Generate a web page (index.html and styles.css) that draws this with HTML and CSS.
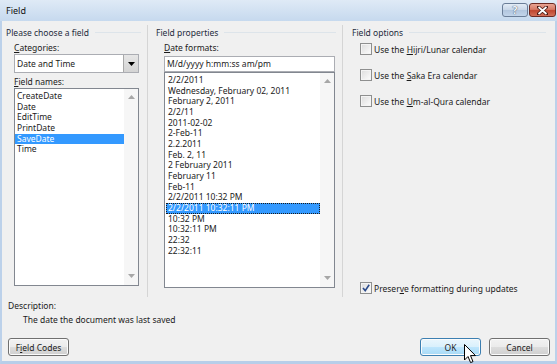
FILE: index.html
```html
<!DOCTYPE html>
<html>
<head>
    <title>Field</title>
    <meta name="viewport" content="width=device-width, initial-scale=1.0">
    <link rel="stylesheet" href="styles.css">
</head>
<body>
    <div class="window">
        <div class="titlebar">
            <span class="title">Field</span>
            <div class="caption">
                <span class="cap help">?</span>
                <span class="cap close">
                    <svg width="11" height="9" viewBox="0 0 11 9"><path d="M1.5 1 L9.5 8 M9.5 1 L1.5 8" stroke="#4a1a14" stroke-width="3.4" stroke-linecap="square"/><path d="M1.5 1 L9.5 8 M9.5 1 L1.5 8" stroke="#fff" stroke-width="1.8"/></svg>
                </span>
            </div>
        </div>

        <div class="dialog">
            <div class="columns">
                <!-- left: field choice -->
                <section class="col col-choose">
                    <div class="group-title"><span>Please choose a field</span></div>
                    <div class="inner">
                        <div class="label first"><u>C</u>ategories:</div>
                        <div class="combo">
                            <span class="combo-text">Date and Time</span>
                            <span class="combo-btn">
                                <svg width="7" height="4" viewBox="0 0 7 4"><path d="M0 0 H7 L3.5 4 Z" fill="#000"/></svg>
                            </span>
                        </div>
                        <div class="label names"><u>F</u>ield names:</div>
                        <div class="listbox list-names">
                            <div class="items">
                                <div class="item">CreateDate</div>
                                <div class="item">Date</div>
                                <div class="item">EditTime</div>
                                <div class="item">PrintDate</div>
                                <div class="item selected">SaveDate</div>
                                <div class="item">Time</div>
                            </div>
                            <div class="scrollbar">
                                <svg width="7" height="4" viewBox="0 0 7 4"><path d="M0 4 H7 L3.5 0 Z" fill="#a7a7a7"/></svg>
                                <svg width="7" height="4" viewBox="0 0 7 4"><path d="M0 0 H7 L3.5 4 Z" fill="#a7a7a7"/></svg>
                            </div>
                        </div>
                    </div>
                </section>

                <!-- middle: field properties -->
                <section class="col col-props">
                    <div class="group-title"><span>Field properties</span></div>
                    <div class="inner">
                        <div class="label first"><u>D</u>ate formats:</div>
                        <div class="textbox">M/d/yyyy h:mm:ss am/pm</div>
                        <div class="listbox list-formats">
                            <div class="items">
                                <div class="item">2/2/2011</div>
                                <div class="item">Wednesday, February 02, 2011</div>
                                <div class="item">February 2, 2011</div>
                                <div class="item">2/2/11</div>
                                <div class="item">2011-02-02</div>
                                <div class="item">2-Feb-11</div>
                                <div class="item">2.2.2011</div>
                                <div class="item">Feb. 2, 11</div>
                                <div class="item">2 February 2011</div>
                                <div class="item">February 11</div>
                                <div class="item">Feb-11</div>
                                <div class="item">2/2/2011 10:32 PM</div>
                                <div class="item selected focused">2/2/2011 10:32:11 PM</div>
                                <div class="item">10:32 PM</div>
                                <div class="item">10:32:11 PM</div>
                                <div class="item">22:32</div>
                                <div class="item">22:32:11</div>
                            </div>
                            <div class="scrollbar">
                                <svg width="7" height="4" viewBox="0 0 7 4"><path d="M0 4 H7 L3.5 0 Z" fill="#a7a7a7"/></svg>
                                <svg width="7" height="4" viewBox="0 0 7 4"><path d="M0 0 H7 L3.5 4 Z" fill="#a7a7a7"/></svg>
                            </div>
                        </div>
                    </div>
                </section>

                <!-- right: field options -->
                <section class="col col-options">
                    <div class="group-title"><span>Field options</span></div>
                    <div class="inner options">
                        <div class="check"><span class="box"></span><span>Use the <u>H</u>ijri/Lunar calendar</span></div>
                        <div class="check"><span class="box"></span><span>Use the <u>S</u>aka Era calendar</span></div>
                        <div class="check"><span class="box"></span><span>Use the <u>U</u>m-al-Qura calendar</span></div>
                        <div class="check preserve">
                            <span class="box checked">
                                <svg width="10" height="10" viewBox="0 0 10 10"><path d="M2 5 L4.2 7.6 L8.2 1.8" fill="none" stroke="#2a4a8a" stroke-width="1.6"/></svg>
                            </span>
                            <span>Preser<u>v</u>e formatting during updates</span>
                        </div>
                    </div>
                </section>
            </div>

            <div class="description">
                <div class="desc-label">Description:</div>
                <div class="desc-text">The date the document was last saved</div>
            </div>

            <div class="buttons">
                <button class="btn">F<u>i</u>eld Codes</button>
                <div class="right-buttons">
                    <button class="btn btn-hot">OK
                        <svg class="cursor" width="13" height="20" viewBox="0 0 13 20"><path d="M0.5 0.5 V16 L4 12.5 L6.6 18.6 L9 17.6 L6.5 11.6 H11.5 Z" fill="#fff" stroke="#000" stroke-width="1"/></svg>
                    </button>
                    <button class="btn">Cancel</button>
                </div>
            </div>
        </div>
    </div>
</body>
</html>
```

FILE: styles.css
```css
body {
    margin: 0;
    font-family: "Noto Sans", "Open Sans", sans-serif;
    font-size: 8.5px;
    color: #1b1b1b;
}
u {
    text-decoration-thickness: 1px;
    text-underline-offset: 1px;
}
.window {
    width: 557px;
    height: 364px;
    box-sizing: border-box;
    background: #c7d9ee;
    border-left: 2px solid #bcd1ea;
    border-right: 2px solid #bcd1ea;
    border-bottom: 3px solid #b7cee9;
    display: flex;
    flex-direction: column;
}
.titlebar {
    height: 21px;
    flex: none;
    display: flex;
    align-items: flex-start;
    justify-content: space-between;
    background: linear-gradient(to bottom, #dfeaf6, #c6d9ee);
    margin: 0 -2px;
    padding: 0 1px 0 6px;
}
.title {
    font-size: 9px;
    line-height: 21px;
    color: #111;
}
.caption {
    display: flex;
    gap: 1px;
    padding-top: 3px;
}
.cap {
    height: 14px;
    box-sizing: border-box;
    border: 1px solid #6b7e98;
    border-radius: 3px;
    display: flex;
    align-items: center;
    justify-content: center;
}
.help {
    width: 26px;
    background: linear-gradient(to bottom, #e3ecf6 0%, #c9d7e8 48%, #b2c6de 52%, #c2d4ea 100%);
    color: #f4f7fb;
    font-weight: bold;
    font-size: 10px;
    text-shadow: 0 0 1px #4b5d75, 0 0 1px #4b5d75;
}
.close {
    width: 27px;
    border-color: #6d2a22;
    background: linear-gradient(to bottom, #e8a493 0%, #d67a66 45%, #c0462f 55%, #d3705a 100%);
}
.dialog {
    flex: 1;
    background: #f0f0f0;
    padding: 0 3px 0 4px;
    display: flex;
    flex-direction: column;
}
.columns {
    display: flex;
    margin-top: 4px;
}
.col {
    padding-top: 1px;
    display: flex;
    flex-direction: column;
}
.col-choose {
    width: 141px;
    border-right: 1px solid #d5d5d5;
    padding-bottom: 11px;
}
.col-props {
    width: 186px;
    padding-left: 8px;
    border-right: 1px solid #d5d5d5;
}
.col-options {
    flex: 1;
    padding-left: 9px;
}
.group-title {
    display: flex;
    align-items: center;
    height: 12px;
    gap: 6px;
    color: #1e2b3c;
}
.group-title::after {
    content: "";
    flex: 1;
    height: 1px;
    background: #dde4ea;
    margin-right: 6px;
}
.inner {
    padding-left: 8px;
    display: flex;
    flex-direction: column;
}
.label {
    height: 12px;
    line-height: 12px;
}
.label.first {
    margin-top: 4px;
}
.label.names {
    margin-top: 3px;
}
.combo {
    width: 125px;
    height: 19px;
    box-sizing: border-box;
    border: 1px solid #abadb3;
    background: #fff;
    display: flex;
}
.combo-text {
    flex: 1;
    line-height: 17px;
    padding-left: 2px;
}
.combo-btn {
    width: 14px;
    border-left: 1px solid #a9a9a9;
    background: linear-gradient(to bottom, #e6e6e6, #d4d4d4);
    display: flex;
    align-items: center;
    justify-content: center;
}
.textbox {
    width: 171px;
    height: 16px;
    box-sizing: border-box;
    margin-top: 2px;
    border: 1px solid #abadb3;
    background: #fff;
    line-height: 14px;
    padding-left: 2px;
}
.listbox {
    box-sizing: border-box;
    border: 1px solid #828790;
    background: #fff;
    display: flex;
}
.list-names {
    width: 125px;
    height: 198px;
}
.list-formats {
    width: 171px;
    height: 216px;
}
.items {
    flex: 1;
    padding-top: 2px;
}
.item {
    height: 10.67px;
    line-height: 10.67px;
    padding-left: 2px;
    white-space: nowrap;
}
.list-formats .item {
    margin-left: 1px;
}
.item.selected {
    background: #3399ff;
    color: #fff;
}
.item.focused {
    outline: 1px dotted #1b1b1b;
    outline-offset: -1px;
}
.scrollbar {
    width: 14px;
    background: #f6f6f6;
    display: flex;
    flex-direction: column;
    align-items: center;
    justify-content: space-between;
    padding: 6px 0 7px;
}
.options {
    flex: 1;
}
.check {
    display: flex;
    align-items: center;
    gap: 2px;
    height: 12px;
    margin-top: 14px;
}
.check:first-child {
    margin-top: 5px;
}
.check.preserve {
    margin-top: auto;
    margin-bottom: 3px;
}
.box {
    width: 12px;
    height: 12px;
    box-sizing: border-box;
    border: 1px solid #8e8f8f;
    background: linear-gradient(135deg, #dcdcdc, #fdfdfd);
    box-shadow: inset 0 0 0 1px #f4f4f4;
    display: flex;
    align-items: center;
    justify-content: center;
}
.description {
    margin-top: 3px;
    padding-left: 2px;
}
.desc-label {
    height: 12px;
    line-height: 12px;
}
.desc-text {
    height: 12px;
    line-height: 12px;
    margin-top: 2px;
    padding-left: 15px;
}
.buttons {
    margin-top: 12px;
    display: flex;
    justify-content: space-between;
    padding: 0 2px;
}
.right-buttons {
    display: flex;
    gap: 8px;
}
.btn {
    width: 61px;
    height: 18px;
    box-sizing: border-box;
    border: 1px solid #707070;
    border-radius: 3px;
    background: linear-gradient(to bottom, #f2f2f2 0%, #ebebeb 50%, #dddddd 51%, #cfcfcf 100%);
    box-shadow: inset 0 0 0 1px #fbfbfb;
    font-family: inherit;
    font-size: 8.5px;
    color: #1b1b1b;
    padding: 0;
    position: relative;
}
.btn-hot {
    border-color: #3c7fb1;
    background: linear-gradient(to bottom, #eaf6fd 0%, #d9f0fc 50%, #bee6fd 51%, #a7d9f5 100%);
}
.cursor {
    position: absolute;
    left: 43px;
    top: 5px;
}
```
